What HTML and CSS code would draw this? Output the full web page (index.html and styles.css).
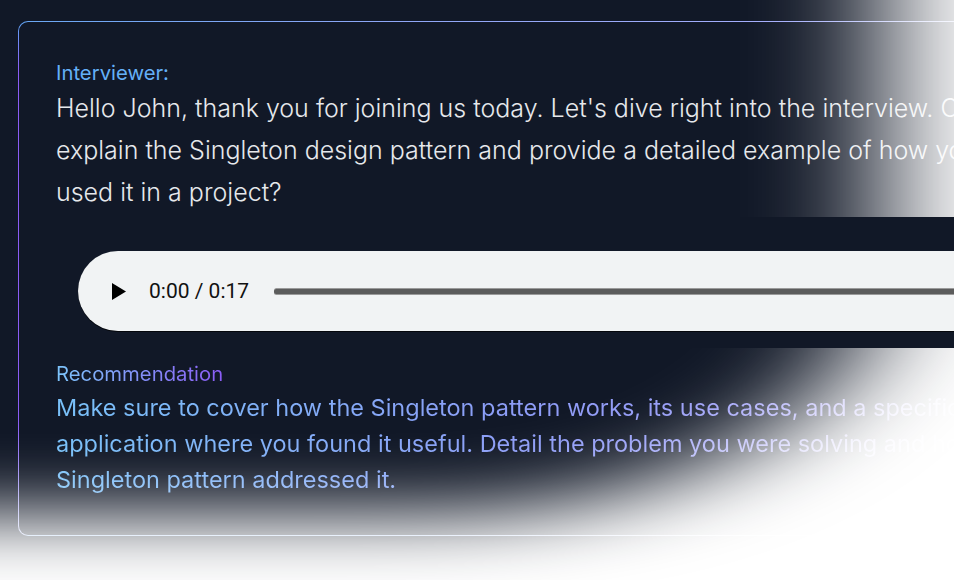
FILE: index.html
```html
<!DOCTYPE html>
<html lang="en">
<head>
<meta charset="utf-8">
<title>Interview</title>
<link rel="stylesheet" href="styles.css">
</head>
<body>
<div class="stage">
  <div class="card">
    <div class="label interviewer">Interviewer:</div>
    <p class="question">Hello John, thank you for joining us today. Let's dive right into the interview. Could you explain the Singleton design pattern and provide a detailed example of how you have used it in a project?</p>
    <div class="audio-row">
      <div class="player">
        <svg class="play" viewBox="0 0 14 17" width="14" height="17"><path d="M0 0 L14 8.5 L0 17 Z"/></svg>
        <span class="time">0:00 / 0:17</span>
        <div class="track"></div>
      </div>
    </div>
    <div class="label rec-label"><span>Recommendation</span></div>
    <p class="rec-text">Make sure to cover how the Singleton pattern works, its use cases, and a specific application where you found it useful. Detail the problem you were solving and how the Singleton pattern addressed it.</p>
  </div>
  <div class="fade"></div>
</div>
</body>
</html>
```
FILE: styles.css
```css
html, body {
  margin: 0;
  height: 100%;
  overflow: hidden;
  background: #111827;
}

.stage {
  position: relative;
  height: 580px;
  overflow: hidden;
  box-sizing: border-box;
  padding: 21px 0 0 18px;
  font-family: Inter, "Noto Sans", sans-serif;
}

.card {
  width: 1091px;
  box-sizing: border-box;
  padding: 37px;
  border: 1px solid transparent;
  border-radius: 10px;
  background:
    linear-gradient(#111827, #111827) padding-box,
    linear-gradient(90deg, #6aa8f4 0%, #8fa6f6 35%, #a5aefc 70%, #c7d2fe 100%) top / 100% 1px no-repeat border-box,
    linear-gradient(90deg, #a6c8f2 0%, #c7d2fe 100%) bottom / 100% 1px no-repeat border-box,
    linear-gradient(180deg, #5fa6f7 0px, #8b5cf6 50px, #8b5cf6 400px, #b8c6f5 100%) border-box;
}

.label {
  font-size: 20.3px;
  line-height: 28px;
  font-weight: 400;
}

.interviewer {
  color: #64b0f7;
}

.question {
  margin: 0;
  font-size: 25px;
  line-height: 42px;
  font-weight: 300;
  color: #e6e8ec;
}

.audio-row {
  position: relative;
  z-index: 2;
  margin-top: 4px;
  padding: 34px 0 17px 22px;
  background: #111827;
  display: flex;
}

.player {
  flex: 1;
  height: 80px;
  box-sizing: border-box;
  border-radius: 40px;
  background: #f1f3f4;
  display: flex;
  align-items: center;
  padding-left: 34px;
  box-shadow: 0 1px 0 #05070c;
}

.play {
  display: block;
  fill: #000;
  flex: none;
}

.time {
  margin-left: 23px;
  font-family: Roboto, "Liberation Sans", sans-serif;
  font-size: 21px;
  color: #111;
  white-space: nowrap;
}

.track {
  flex: 1;
  height: 5px;
  margin-left: 25px;
  border-radius: 3px;
  background: #5c5c5c;
  box-shadow: 0 -1px 0 #9a9a9a, 0 1px 0 #9a9a9a;
}

.rec-label {
  margin-top: 12px;
}

.rec-label span {
  background: linear-gradient(90deg, #7cc4fa 0%, #8b5cf6 100%);
  -webkit-background-clip: text;
  background-clip: text;
  color: transparent;
}

.rec-text {
  margin: 2px 0 0;
  font-size: 23.5px;
  line-height: 36px;
  font-weight: 400;
  background: linear-gradient(90deg, #78c0f8 0%, #8c9cf6 45%, #a29bf8 80%, #b3aafa 100%);
  -webkit-background-clip: text;
  background-clip: text;
  color: transparent;
}

.fade {
  position: absolute;
  left: -900px;
  top: -900px;
  width: 1891px;
  height: 1914px;
  box-sizing: border-box;
  border: 500px solid #fff;
  border-bottom-right-radius: 750px;
  filter: blur(36px);
  transform: scaleX(1.8);
  transform-origin: 900px 0;
  z-index: 1;
  pointer-events: none;
}
```
